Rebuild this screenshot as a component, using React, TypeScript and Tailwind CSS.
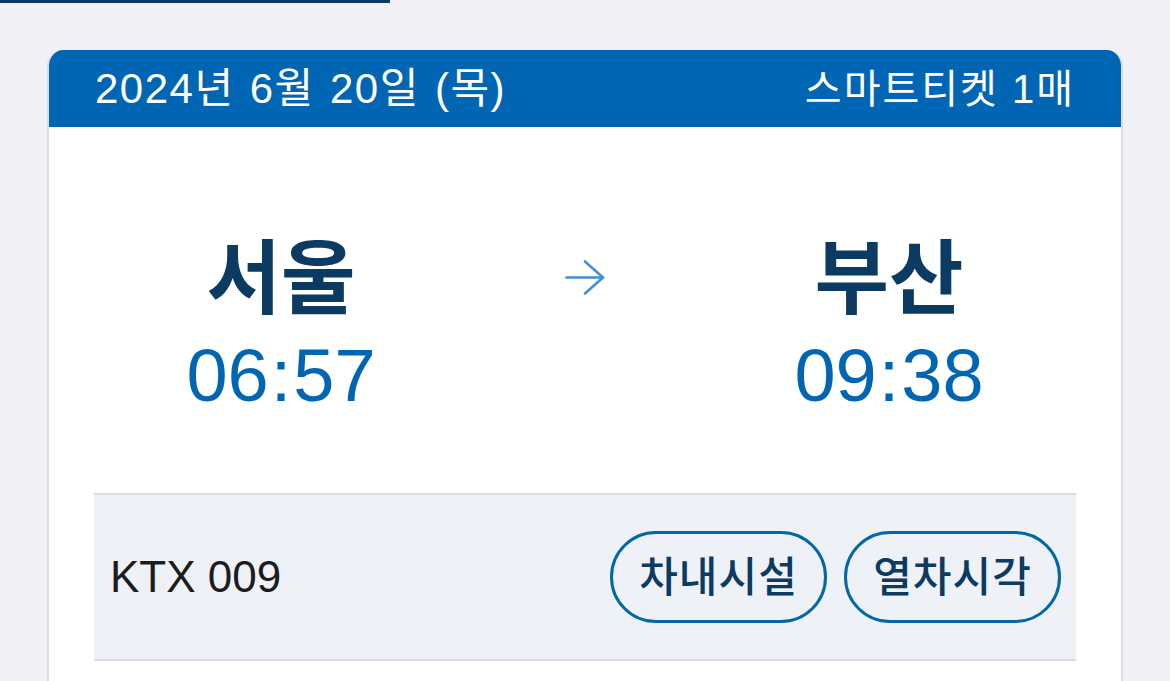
const FONT = "font-['Liberation_Sans','Noto_Sans_CJK_KR',sans-serif]";

function Station({ name, time }: { name: string; time: string }) {
  const [h, m] = time.split(":");
  return (
    <div className="flex flex-col items-center">
      <div className="text-[81px] font-bold leading-none text-[#0b3a62]">{name}</div>
      <div className="mt-[19px] text-[74px] leading-none text-[#0066b3]">
        {h}
        <span className="px-[2px]">:</span>
        {m}
      </div>
    </div>
  );
}

export default function App() {
  return (
    <div className={`${FONT} min-h-[681px] w-[1170px] overflow-hidden bg-[#f1f1f5]`}>
      {/* top progress strip */}
      <div className="h-[3px] w-[390px] bg-[#0b3b63]" />

      <div className="mx-[47px] mt-[47px] overflow-hidden rounded-t-[16px] border-x-2 border-[#dcdce3] bg-white">
        <div className="flex h-[77px] items-center justify-between bg-[#0066b3] pl-[46px] pr-[46px] text-white">
          <span className="text-[42px] leading-none tracking-[1.5px] [word-spacing:2px]">2024년 6월 20일 (목)</span>
          <span className="text-[40px] leading-none tracking-[2px]">스마트티켓 1매</span>
        </div>

        <div className="px-[45px]">
          <div className="grid h-[366px] grid-cols-[374px_1fr_374px] items-start pt-[112px]">
            <Station name="서울" time="06:57" />
            <div className="mt-[21px] flex justify-center">
              <svg width="40" height="36" viewBox="0 0 40 36" fill="none" stroke="#4390d2" strokeWidth="2.6" strokeLinecap="round" strokeLinejoin="round">
                <path d="M1.5 17.5H38" />
                <path d="M20 1.5L38 17.5L20 33.5" />
              </svg>
            </div>
            <Station name="부산" time="09:38" />
          </div>

          <div className="flex h-[168px] items-center justify-between border-y-2 border-[#d8dbe1] bg-[#eef1f6] pl-[16px] pr-[15px]">
            <span className="text-[44px] leading-none text-[#1c1c1c]">KTX 009</span>
            <div className="flex gap-[17px]">
              {["차내시설", "열차시각"].map((b) => (
                <button
                  key={b}
                  className="flex h-[92px] w-[217px] items-center justify-center rounded-full border-[3px] border-[#0068a8] text-[42px] font-medium tracking-[1px] text-[#0b3a62]"
                >
                  {b}
                </button>
              ))}
            </div>
          </div>
          <div className="h-[40px]" />
        </div>
      </div>
    </div>
  );
}
